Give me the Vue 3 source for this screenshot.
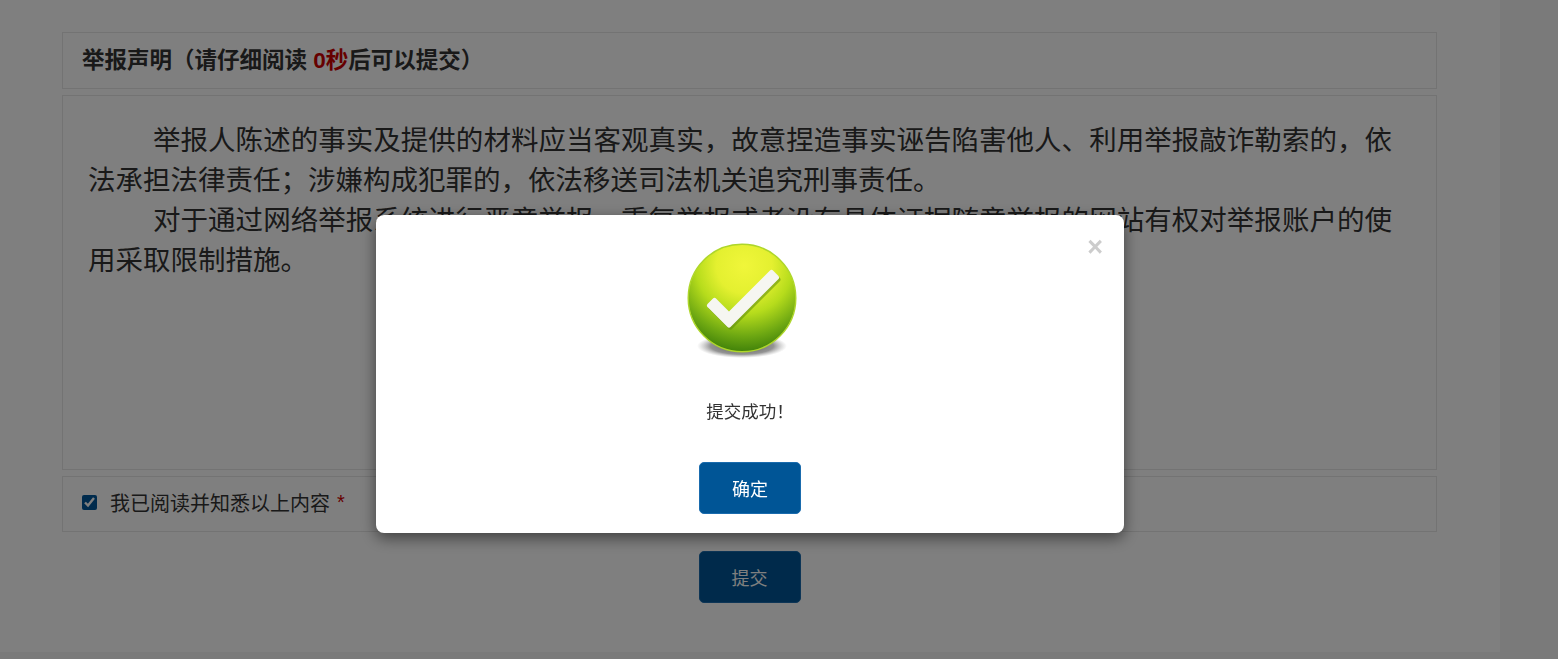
<template>
  <div class="page">
    <div class="panel">
      <div class="box title-box">
        举报声明（请仔细阅读&nbsp;<span class="red">0秒</span>后可以提交）
      </div>
      <div class="box notice-box">
        <p v-for="text in paragraphs" :key="text">{{ text }}</p>
      </div>
      <label class="box agree-box">
        <input type="checkbox" class="agree-check" checked />
        <span>我已阅读并知悉以上内容</span>
        <span class="red star">*</span>
      </label>
      <div class="submit-row">
        <button class="btn" type="button">提交</button>
      </div>
    </div>

    <div class="overlay">
      <div class="modal">
        <span class="close">×</span>
        <svg class="success-icon" width="120" height="124" viewBox="0 0 120 124">
          <defs>
            <radialGradient id="ballFill" cx="0.52" cy="0.2" r="0.86">
              <stop offset="0" stop-color="#f0f63a" />
              <stop offset="0.3" stop-color="#e4f030" />
              <stop offset="0.52" stop-color="#b6dc1c" />
              <stop offset="0.76" stop-color="#6ea812" />
              <stop offset="0.94" stop-color="#3f8009" />
              <stop offset="1" stop-color="#5d9a10" />
            </radialGradient>
            <radialGradient id="ballShadow" cx="0.5" cy="0.5" r="0.5">
              <stop offset="0" stop-color="#444" stop-opacity="0.95" />
              <stop offset="0.7" stop-color="#666" stop-opacity="0.7" />
              <stop offset="1" stop-color="#999" stop-opacity="0" />
            </radialGradient>
          </defs>
          <ellipse cx="60" cy="105" rx="45" ry="12" fill="url(#ballShadow)" />
          <circle cx="60" cy="57" r="53.8" fill="url(#ballFill)" stroke="#aed62a" stroke-width="1.4" />
          <path class="tick" d="M32.5 59.5 L47 74 L89.5 31.5 L94.5 36.5 L47 84 L27.5 64.5 Z" fill="#5d8a10" stroke="#5d8a10" stroke-opacity="0.55" fill-opacity="0.55" transform="translate(1.5 2)" />
          <path class="tick" d="M32.5 59.5 L47 74 L89.5 31.5 L94.5 36.5 L47 84 L27.5 64.5 Z" fill="#f6f6f1" stroke="#f6f6f1" />
        </svg>
        <p class="message">提交成功！</p>
        <button class="btn" type="button">确定</button>
      </div>
    </div>
  </div>
</template>

<script setup>
const paragraphs = [
  '举报人陈述的事实及提供的材料应当客观真实，故意捏造事实诬告陷害他人、利用举报敲诈勒索的，依法承担法律责任；涉嫌构成犯罪的，依法移送司法机关追究刑事责任。',
  '对于通过网络举报系统进行恶意举报、重复举报或者没有具体证据随意举报的网站有权对举报账户的使用采取限制措施。'
]
</script>

<style>
html,
body {
  overflow: hidden;
}
</style>

<style scoped>
.page {
  height: 659px;
  background: #f5f5f5;
  font-family: "Liberation Sans", "Noto Sans CJK SC", sans-serif;
  color: #333;
}

.panel {
  box-sizing: border-box;
  width: 1500px;
  height: 652px;
  padding: 32px 63px 0 62px;
  background: #fff;
}

.box {
  box-sizing: border-box;
  border: 1px solid #e6e6e6;
}

.title-box {
  height: 57px;
  padding: 0 19px;
  font-size: 22.5px;
  font-weight: 700;
  line-height: 55px;
}

.red {
  color: #c00;
}

.notice-box {
  height: 375px;
  margin-top: 6px;
  padding: 25px 44px 0 25px;
  font-size: 27.5px;
  line-height: 40px;
  text-align: justify;
}

.notice-box p {
  margin: 0;
  text-indent: 65px;
}

.agree-box {
  display: flex;
  align-items: center;
  height: 56px;
  margin-top: 6px;
  padding: 0 19px 4px;
  font-size: 20px;
}

.agree-check {
  width: 15px;
  height: 15px;
  margin: 0 13px 0 0;
  accent-color: #00579b;
}

.star {
  margin-left: 7px;
  font-size: 20px;
}

.submit-row {
  display: flex;
  justify-content: center;
  margin-top: 19px;
}

.btn {
  width: 102px;
  height: 52px;
  padding: 0 0 1px;
  border: 1px solid #1a6bad;
  border-radius: 5px;
  background: #005596;
  color: #fff;
  font-family: inherit;
  font-size: 18px;
}

.overlay {
  position: fixed;
  inset: 0;
  display: flex;
  justify-content: center;
  align-items: flex-start;
  padding-right: 58px;
  background: rgba(0, 0, 0, 0.5);
}

.modal {
  position: relative;
  display: flex;
  flex-direction: column;
  align-items: center;
  box-sizing: border-box;
  width: 748px;
  height: 318px;
  margin-top: 215px;
  padding-top: 26px;
  border-radius: 8px;
  background: #fff;
  box-shadow: 0 5px 15px rgba(0, 0, 0, 0.5);
}

.close {
  position: absolute;
  top: 15px;
  right: 21px;
  color: #ccc;
  font-size: 27px;
  font-weight: 700;
  line-height: 34px;
}

.success-icon {
  margin-left: -16px;
}

.tick {
  stroke-width: 5;
  stroke-linejoin: round;
}

.message {
  margin: 35px 0 38px;
  font-size: 17.5px;
  line-height: 24px;
}
</style>
